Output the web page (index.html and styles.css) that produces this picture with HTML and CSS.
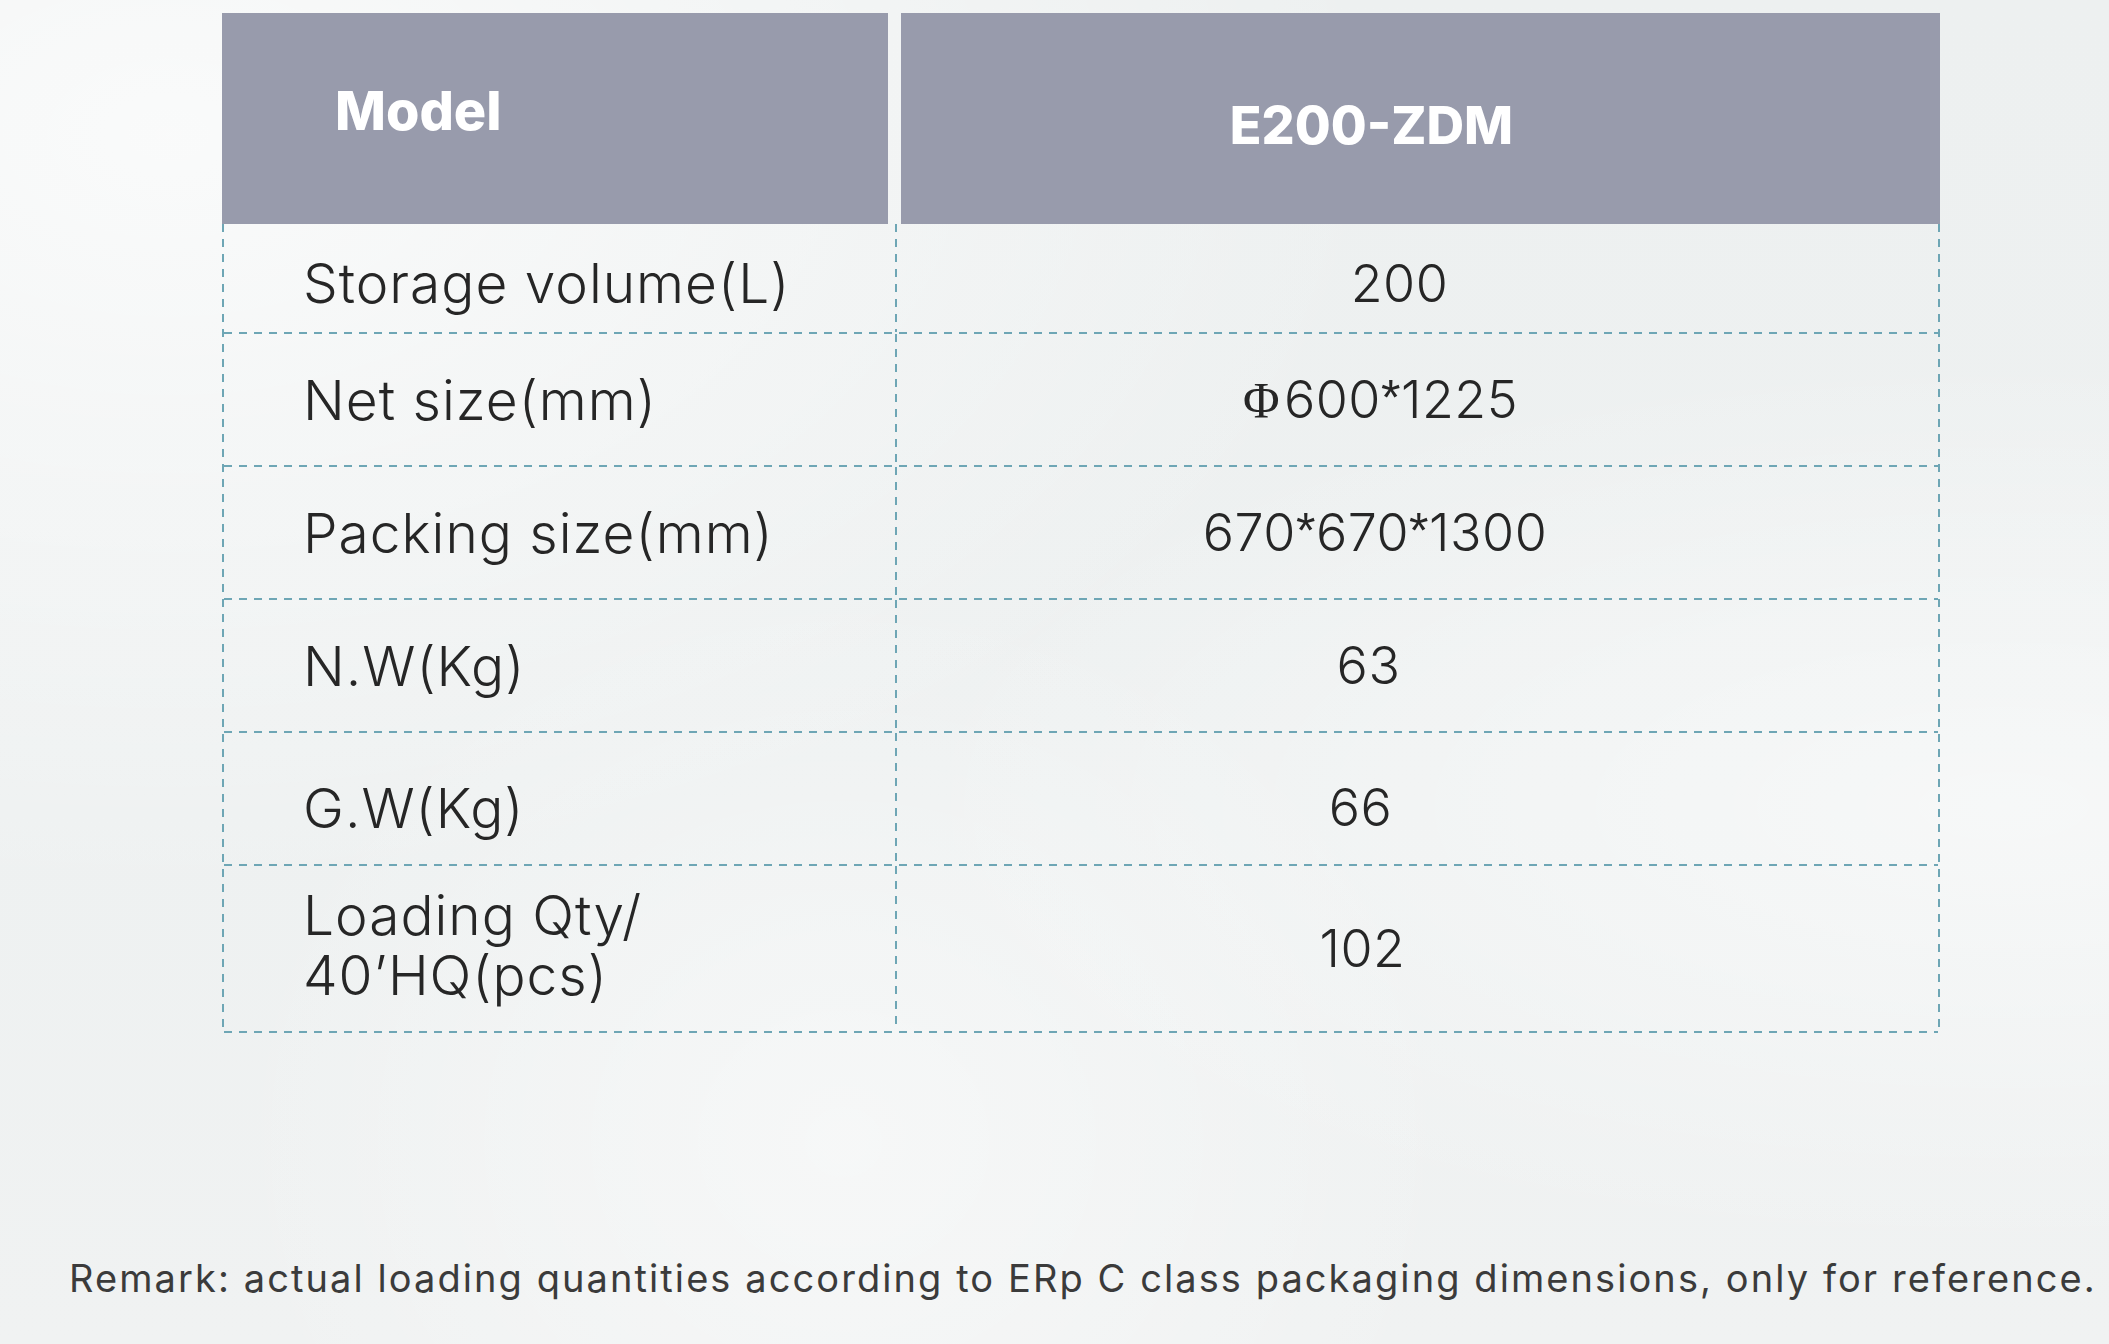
FILE: index.html
```html
<!DOCTYPE html>
<html lang="en">
<head>
<meta charset="utf-8">
<title>E200-ZDM specification</title>
<link rel="stylesheet" href="styles.css">
</head>
<body>
<div class="page">
  <div class="spec">
    <div class="spec-head">
      <div class="head-cell head-label">Model</div>
      <div class="head-cell head-model">E200-ZDM</div>
    </div>
    <div class="spec-body">
      <div class="row row-first">
        <div class="cell label">Storage volume(L)</div>
        <div class="cell value v-200">200</div>
      </div>
      <div class="row">
        <div class="cell label">Net size(mm)</div>
        <div class="cell value v-net"><span class="phi">Φ</span>600<span class="star">*</span>1225</div>
      </div>
      <div class="row">
        <div class="cell label">Packing size(mm)</div>
        <div class="cell value v-pack">670<span class="star">*</span>670<span class="star">*</span>1300</div>
      </div>
      <div class="row">
        <div class="cell label">N.W(Kg)</div>
        <div class="cell value v-nw">63</div>
      </div>
      <div class="row row-gw">
        <div class="cell label">G.W(Kg)</div>
        <div class="cell value v-gw">66</div>
      </div>
      <div class="row row-last">
        <div class="cell label two-line">Loading Qty/<br>40’HQ(pcs)</div>
        <div class="cell value v-qty">102</div>
      </div>
    </div>
  </div>
  <p class="remark">Remark: actual loading quantities according to ERp C class packaging dimensions, only for reference.</p>
</div>
</body>
</html>
```

FILE: styles.css
```css
html, body {
  margin: 0;
  padding: 0;
}

body {
  width: 2109px;
  height: 1344px;
  overflow: hidden;
  background:
    radial-gradient(ellipse at 8% 10%, rgba(255,255,255,0.7), rgba(255,255,255,0) 45%),
    radial-gradient(ellipse at 95% 60%, rgba(255,255,255,0.5), rgba(255,255,255,0) 40%),
    radial-gradient(ellipse at 40% 85%, rgba(255,255,255,0.45), rgba(255,255,255,0) 35%),
    linear-gradient(180deg, #edf0f0 0%, #eef1f1 60%, #f0f2f2 100%);
  font-family: Inter, "Open Sans", "DejaVu Sans", sans-serif;
  color: #262626;
}

.page {
  padding: 13px 0 0 222px;
}

.spec {
  width: 1718px;
}

.spec-head {
  display: grid;
  grid-template-columns: 666px 1039px;
  column-gap: 13px;
  height: 211px;
}

.head-cell {
  background: #989bac;
  color: #ffffff;
  font-weight: 800;
  font-size: 52px;
  display: flex;
  align-items: center;
}

.head-label {
  padding-left: 113px;
  padding-bottom: 16px;
  font-size: 54px;
}

.head-model {
  justify-content: center;
  padding-right: 98px;
  padding-top: 14px;
}

.spec-body {
  background-image:
    repeating-linear-gradient(to bottom, #6ea6b5 0 8px, transparent 8px 15px),
    repeating-linear-gradient(to bottom, #6ea6b5 0 8px, transparent 8px 15px);
  background-size: 2px 100%, 2px 100%;
  background-position: left top, right top;
  background-repeat: no-repeat;
  padding: 0 2px;
}

.row {
  display: grid;
  grid-template-columns: 673px 1fr;
  height: 133px;
  padding-bottom: 2px;
  box-sizing: border-box;
  background-image: repeating-linear-gradient(to right, #6ea6b5 0 8px, transparent 8px 15px);
  background-size: 100% 2px;
  background-position: left bottom;
  background-repeat: no-repeat;
}

.row-first {
  height: 110px;
}

.row-last {
  height: 167px;
}

.cell {
  display: flex;
  align-items: center;
  font-size: 55px;
  font-weight: 300;
  letter-spacing: 1px;
}

.label {
  padding-left: 79px;
  background-image: repeating-linear-gradient(to bottom, #6ea6b5 0 8px, transparent 8px 15px);
  background-size: 2px 100%;
  background-position: right top;
  background-repeat: no-repeat;
}

.row-first .cell {
  padding-top: 10px;
}

.row-gw .cell {
  padding-top: 18px;
}

.two-line {
  line-height: 60px;
  padding-bottom: 8px;
}

.value {
  justify-content: center;
  font-size: 52px;
  letter-spacing: 0.5px;
  padding-right: 86px;
}

.v-200 { padding-right: 36px; }
.v-net { padding-right: 74px; }
.v-pack { padding-right: 85px; }
.v-nw { padding-right: 98px; }
.v-gw { padding-right: 114px; }
.v-qty { padding-right: 110px; }

.star {
  font-family: "Liberation Sans", sans-serif;
  font-weight: 400;
  font-size: 50px;
  position: relative;
  top: -2px;
}

.phi {
  font-family: "Liberation Serif", "DejaVu Serif", serif;
  font-weight: 400;
  font-size: 50px;
  margin-right: 4px;
}

.remark {
  margin: 220px 0 0 -153px;
  font-size: 38px;
  line-height: 50px;
  letter-spacing: 2.08px;
  font-weight: 400;
  color: #3b3b3b;
  white-space: nowrap;
}
```
